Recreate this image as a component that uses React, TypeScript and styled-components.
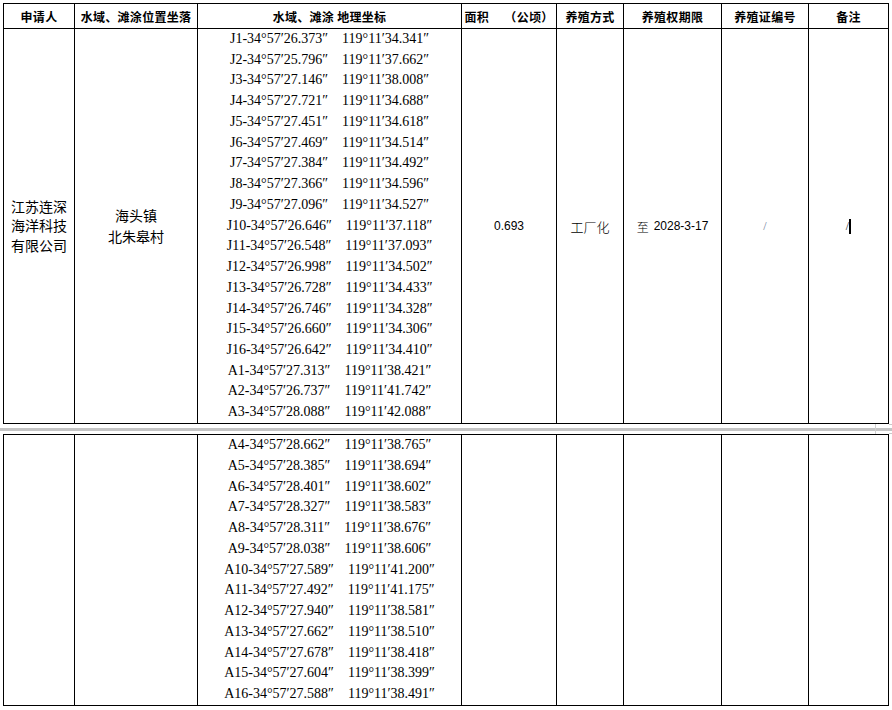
import React from "react";
import styled, { createGlobalStyle } from "styled-components";

const GlobalStyle = createGlobalStyle`
  html, body { margin: 0; padding: 0; background: #ffffff; }
  body { font-family: "Liberation Serif", "Noto Sans CJK SC", serif; color: #000; }
`;

const COLS = "71px 123px 264px 95px 67px 98px 87px 80px";
const LINE = 20.78;

const Page = styled.div`
  width: 892px;
  padding-top: 3px;
  display: flex;
  flex-direction: column;
`;

const Table = styled.div`
  margin-left: 3px;
  width: 885px;
  display: grid;
  grid-template-columns: ${COLS};
  border-top: 1px solid #000;
  border-left: 1px solid #000;
`;

const Cell = styled.div<{ $h?: number }>`
  border-right: 1px solid #000;
  border-bottom: 1px solid #000;
  height: ${(p) => (p.$h ? `${p.$h}px` : "auto")};
  display: flex;
  align-items: center;
  justify-content: center;
  text-align: center;
  box-sizing: content-box;
  overflow: hidden;
`;

const HeadCell = styled(Cell)`
  height: 24px;
  font-family: "Noto Sans CJK SC", sans-serif;
  font-weight: 700;
  font-size: 12px;
  white-space: pre;
  letter-spacing: 0.3px;
`;

const CompanyCell = styled(Cell)`
  font-family: "Noto Sans CJK SC", sans-serif;
  font-size: 14px;
  line-height: 19.3px;
  height: 394px;
`;

const PlaceCell = styled(Cell)`
  font-family: "Noto Sans CJK SC", sans-serif;
  font-size: 14px;
  line-height: 21.5px;
  height: 394px;
`;

const CoordCell = styled(Cell)`
  flex-direction: column;
  justify-content: flex-start;
`;

const CoordLine = styled.div`
  height: ${LINE}px;
  line-height: ${LINE - 1}px;
  display: flex;
  justify-content: center;
  gap: 14px;
  font-family: "Liberation Serif", "DejaVu Serif", serif;
  font-size: 14px;
  white-space: pre;
`;

const ValueCell = styled(Cell)<{ $cjk?: boolean }>`
  font-family: ${(p) =>
    p.$cjk ? `"Noto Sans CJK SC", sans-serif` : `"Liberation Sans", "Noto Sans CJK SC", sans-serif`};
  font-size: ${(p) => (p.$cjk ? "13px" : "12px")};
  font-weight: ${(p) => (p.$cjk ? 300 : 400)};
  height: 394px;
`;

const Zhi = styled.span`
  font-family: "Noto Sans CJK SC", sans-serif;
  font-size: 12px;
  font-weight: 300;
  margin-right: 5px;
`;

const Slash = styled.span<{ $light?: boolean }>`
  font-family: "Liberation Serif", serif;
  font-size: 12px;
  color: ${(p) => (p.$light ? "#6f7d99" : "#222")};
`;

const Caret = styled.span`
  display: inline-block;
  width: 2px;
  height: 15px;
  background: #000;
  vertical-align: middle;
`;

const EmptyCell = styled(Cell)``;

const PageBreak = styled.div`
  position: relative;
  height: 10px;
  display: flex;
  flex-direction: column;
`;

const Band = styled.div`
  margin-top: 4px;
  height: 2.5px;
  background: #c4c4c4;
`;

const Tick = styled.div`
  position: absolute;
  left: 875px;
  top: 0;
  width: 1px;
  height: 10px;
  background: #d0d0d0;
`;

const Stub = styled.div<{ $top: number }>`
  position: absolute;
  left: 889px;
  top: ${(p) => p.$top}px;
  width: 3px;
  height: 1px;
  background: #c8c8c8;
`;

const table1: [string, string][] = [
  ["J1-34°57′26.373″", "119°11′34.341″"],
  ["J2-34°57′25.796″", "119°11′37.662″"],
  ["J3-34°57′27.146″", "119°11′38.008″"],
  ["J4-34°57′27.721″", "119°11′34.688″"],
  ["J5-34°57′27.451″", "119°11′34.618″"],
  ["J6-34°57′27.469″", "119°11′34.514″"],
  ["J7-34°57′27.384″", "119°11′34.492″"],
  ["J8-34°57′27.366″", "119°11′34.596″"],
  ["J9-34°57′27.096″", "119°11′34.527″"],
  ["J10-34°57′26.646″", "119°11′37.118″"],
  ["J11-34°57′26.548″", "119°11′37.093″"],
  ["J12-34°57′26.998″", "119°11′34.502″"],
  ["J13-34°57′26.728″", "119°11′34.433″"],
  ["J14-34°57′26.746″", "119°11′34.328″"],
  ["J15-34°57′26.660″", "119°11′34.306″"],
  ["J16-34°57′26.642″", "119°11′34.410″"],
  ["A1-34°57′27.313″", "119°11′38.421″"],
  ["A2-34°57′26.737″", "119°11′41.742″"],
  ["A3-34°57′28.088″", "119°11′42.088″"],
];

const table2: [string, string][] = [
  ["A4-34°57′28.662″", "119°11′38.765″"],
  ["A5-34°57′28.385″", "119°11′38.694″"],
  ["A6-34°57′28.401″", "119°11′38.602″"],
  ["A7-34°57′28.327″", "119°11′38.583″"],
  ["A8-34°57′28.311″", "119°11′38.676″"],
  ["A9-34°57′28.038″", "119°11′38.606″"],
  ["A10-34°57′27.589″", "119°11′41.200″"],
  ["A11-34°57′27.492″", "119°11′41.175″"],
  ["A12-34°57′27.940″", "119°11′38.581″"],
  ["A13-34°57′27.662″", "119°11′38.510″"],
  ["A14-34°57′27.678″", "119°11′38.418″"],
  ["A15-34°57′27.604″", "119°11′38.399″"],
  ["A16-34°57′27.588″", "119°11′38.491″"],
];

const headers = [
  "申请人",
  "水域、滩涂位置坐落",
  "水域、滩涂 地理坐标",
  "面积　 （公顷）",
  "养殖方式",
  "养殖权期限",
  "养殖证编号",
  "备注",
];

const Coords: React.FC<{ rows: [string, string][]; h: number }> = ({ rows, h }) => (
  <CoordCell $h={h}>
    {rows.map(([a, b]) => (
      <CoordLine key={a}>
        <span>{a}</span>
        <span>{b}</span>
      </CoordLine>
    ))}
  </CoordCell>
);

export default function App() {
  return (
    <>
      <GlobalStyle />
      <Page>
        <Table>
          {headers.map((t) => (
            <HeadCell key={t}>{t}</HeadCell>
          ))}
          <CompanyCell>
            <div>
              江苏连深
              <br />
              海洋科技
              <br />
              有限公司
            </div>
          </CompanyCell>
          <PlaceCell>
            <div>
              海头镇
              <br />
              北朱皋村
            </div>
          </PlaceCell>
          <Coords rows={table1} h={394} />
          <ValueCell>0.693</ValueCell>
          <ValueCell $cjk>工厂化</ValueCell>
          <ValueCell>
            <Zhi>至</Zhi>2028-3-17
          </ValueCell>
          <ValueCell>
            <Slash $light>/</Slash>
          </ValueCell>
          <ValueCell>
            <Slash>/</Slash>
            <Caret />
          </ValueCell>
        </Table>
        <PageBreak>
          <Band />
          <Tick />
          <Stub $top={0} />
          <Stub $top={9} />
        </PageBreak>
        <Table>
          <EmptyCell $h={270} />
          <EmptyCell $h={270} />
          <Coords rows={table2} h={270} />
          <EmptyCell $h={270} />
          <EmptyCell $h={270} />
          <EmptyCell $h={270} />
          <EmptyCell $h={270} />
          <EmptyCell $h={270} />
        </Table>
      </Page>
    </>
  );
}
